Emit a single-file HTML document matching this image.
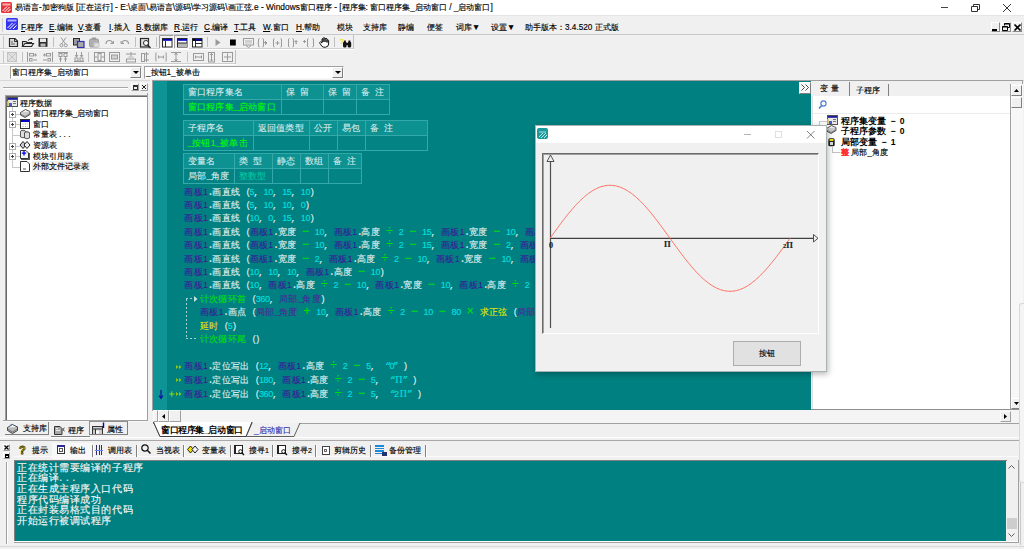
<!DOCTYPE html><html><head><meta charset="utf-8"><style>
*{margin:0;padding:0;box-sizing:border-box}
html,body{width:1024px;height:549px;overflow:hidden;background:#f0f0f0;font-family:"Liberation Sans",sans-serif;font-size:9px;color:#000}
div{position:absolute;white-space:nowrap;-webkit-text-stroke:0.15px currentColor}
span{white-space:pre}
.cd{font-size:9px;letter-spacing:-0.34px}
.ca,.cc,.fw,.cd{-webkit-text-stroke-width:0.1px}
.ca{font-family:"Liberation Mono",monospace;font-size:10px;letter-spacing:-1.34px}
.cc{font-size:9.32px;letter-spacing:0.32px}
.fw{display:inline-block;width:9.32px;text-align:center;font-size:9.32px}
.fl{text-align:left;font-family:"Liberation Mono",monospace;text-indent:-1px}
.fr{text-align:right;font-family:"Liberation Mono",monospace;letter-spacing:-1.5px}
.op{font-size:12px;line-height:10px}
.code{height:13px;line-height:13px}
svg{position:absolute;overflow:visible}
</style></head><body><div style="left:0px;top:0px;width:1024px;height:15px;background:#fff"></div><div style="left:0px;top:15px;width:1024px;height:1px;background:#e6e6e6"></div><div style="left:15px;top:1px;font-size:8.35px;line-height:13px;color:#000">易语言-加密狗版 [正在运行] - E:\桌面\易语言\源码\学习源码\画正弦.e - Windows窗口程序 - [程序集: 窗口程序集_启动窗口 / _启动窗口]</div><div style="left:941px;top:7px;width:7px;height:1px;background:#444"></div><svg style="left:971px;top:4px" width="9" height="8"><path d="M0.5 2.5H6.5V7.5H0.5Z" fill="none" stroke="#333"/><path d="M2.5 2.5V0.5H8.5V5.5H6.5" fill="none" stroke="#333"/></svg><svg style="left:1003px;top:4px" width="8" height="8"><path d="M0 0L8 8M8 0L0 8" stroke="#333" stroke-width="1"/></svg><div style="left:0px;top:34px;width:1024px;height:1px;background:#c8c8c8"></div><div style="left:2px;top:18px;width:1px;height:14px;background:#d0d0d0"></div><div style="left:21px;top:21px;font-size:8.2px;line-height:13px;color:#000"><span style="text-decoration:underline">F</span>.程序</div><div style="left:49px;top:21px;font-size:8.2px;line-height:13px;color:#000"><span style="text-decoration:underline">E</span>.编辑</div><div style="left:78px;top:21px;font-size:8.2px;line-height:13px;color:#000"><span style="text-decoration:underline">V</span>.查看</div><div style="left:109px;top:21px;font-size:8.2px;line-height:13px;color:#000"><span style="text-decoration:underline">I</span>.插入</div><div style="left:136px;top:21px;font-size:8.2px;line-height:13px;color:#000"><span style="text-decoration:underline">B</span>.数据库</div><div style="left:174px;top:21px;font-size:8.2px;line-height:13px;color:#000"><span style="text-decoration:underline">R</span>.运行</div><div style="left:204px;top:21px;font-size:8.2px;line-height:13px;color:#000"><span style="text-decoration:underline">C</span>.编译</div><div style="left:234px;top:21px;font-size:8.2px;line-height:13px;color:#000"><span style="text-decoration:underline">T</span>.工具</div><div style="left:263px;top:21px;font-size:8.2px;line-height:13px;color:#000"><span style="text-decoration:underline">W</span>.窗口</div><div style="left:296px;top:21px;font-size:8.2px;line-height:13px;color:#000"><span style="text-decoration:underline">H</span>.帮助</div><div style="left:337px;top:21px;font-size:8.2px;line-height:13px;color:#000">模块</div><div style="left:363px;top:21px;font-size:8.2px;line-height:13px;color:#000">支持库</div><div style="left:398px;top:21px;font-size:8.2px;line-height:13px;color:#000">静编</div><div style="left:427px;top:21px;font-size:8.2px;line-height:13px;color:#000">便签</div><div style="left:456px;top:21px;font-size:8.2px;line-height:13px;color:#000">词库▼</div><div style="left:491px;top:21px;font-size:8.2px;line-height:13px;color:#000">设置▼</div><div style="left:525px;top:21px;font-size:8.2px;line-height:13px;color:#000">助手版本：3.4.520 正式版</div><div style="left:991px;top:22px;width:9px;height:10px;border:1px solid;border-color:#fff #888 #888 #fff"></div><div style="left:992px;top:29px;width:5px;height:2px;background:#000"></div><div style="left:1001px;top:22px;width:10px;height:10px;border:1px solid;border-color:#fff #888 #888 #fff"></div><svg style="left:1002px;top:23px" width="8" height="8"><path d="M2.5 2.5V0.5H7.5V4.5H5.5" fill="none" stroke="#000"/><path d="M2.5 1H7.5" stroke="#000"/><path d="M0.5 3.5H5.5V7.5H0.5Z" fill="none" stroke="#000"/><path d="M0.5 4H5.5" stroke="#000"/></svg><div style="left:1012px;top:22px;width:10px;height:10px;border:1px solid;border-color:#fff #888 #888 #fff"></div><svg style="left:1014px;top:24px" width="7" height="7"><path d="M0.5 0.5L6.5 6.5M6.5 0.5L0.5 6.5" stroke="#000" stroke-width="1.6"/></svg><div style="left:0px;top:48px;width:354px;height:1px;background:#d0d0d0"></div><div style="left:0px;top:49px;width:354px;height:1px;background:#fff"></div><div style="left:0px;top:63px;width:236px;height:1px;background:#d0d0d0"></div><div style="left:0px;top:64px;width:236px;height:1px;background:#fff"></div><div style="left:353px;top:35px;width:1px;height:14px;background:#c0c0c0"></div><div style="left:235px;top:50px;width:1px;height:14px;background:#c0c0c0"></div><div style="left:3px;top:36px;width:1px;height:12px;background:#c8c8c8"></div><div style="left:3px;top:51px;width:1px;height:12px;background:#c8c8c8"></div><div style="left:53px;top:37px;width:1px;height:10px;background:#c0c0c0"></div><div style="left:135px;top:37px;width:1px;height:10px;background:#c0c0c0"></div><div style="left:156px;top:37px;width:1px;height:10px;background:#c0c0c0"></div><div style="left:207px;top:37px;width:1px;height:10px;background:#c0c0c0"></div><div style="left:334px;top:37px;width:1px;height:10px;background:#c0c0c0"></div><div style="left:22px;top:52px;width:1px;height:10px;background:#c0c0c0"></div><div style="left:88px;top:52px;width:1px;height:10px;background:#c0c0c0"></div><div style="left:187px;top:52px;width:1px;height:10px;background:#c0c0c0"></div><div style="left:10px;top:66px;width:132px;height:13px;background:#fff;border:1px solid;border-color:#a0a0a0 #f8f8f8 #f8f8f8 #a0a0a0"></div><div style="left:12px;top:67px;font-size:8.2px;line-height:12px">窗口程序集_启动窗口</div><div style="left:130px;top:67px;width:11px;height:11px;background:#f0f0f0;border:1px solid;border-color:#fff #808080 #808080 #fff"></div><svg style="left:133px;top:71px" width="6" height="4"><path d="M0 0H6L3 3Z" fill="#000"/></svg><div style="left:144px;top:66px;width:200px;height:13px;background:#fff;border:1px solid;border-color:#a0a0a0 #f8f8f8 #f8f8f8 #a0a0a0"></div><div style="left:146px;top:67px;font-size:8.2px;line-height:12px">_按钮1_被单击</div><div style="left:332px;top:67px;width:11px;height:11px;background:#f0f0f0;border:1px solid;border-color:#fff #808080 #808080 #fff"></div><svg style="left:335px;top:71px" width="6" height="4"><path d="M0 0H6L3 3Z" fill="#000"/></svg><div style="left:0px;top:80px;width:1024px;height:1px;background:#d8d8d8"></div><svg style="left:0;top:0" width="360" height="66"><path d="M159.5 48.5V35.5H173.5" stroke="#a0a0a0" fill="none"/><path d="M173.5 35.5V48.5H159.5" stroke="#fff" fill="none"/><path d="M174.5 48.5V35.5H188.5" stroke="#a0a0a0" fill="none"/><path d="M188.5 35.5V48.5H174.5" stroke="#fff" fill="none"/><path d="M9.5 38.5H15L17.5 41V46.5H9.5Z" fill="#d8d8d8" stroke="#2a2a2a" stroke-width="1.2"/><path d="M14.5 38.5V41.5H17.5" fill="none" stroke="#2a2a2a"/><path d="M11 42H13M11 44H15" stroke="#666"/><path d="M22.5 41.5H26L27 42.5H31.5V46.5H22.5Z" fill="#cfcfcf" stroke="#2a2a2a" stroke-width="1.1"/><path d="M22.5 46.5L25 43.5H33.5L31.5 46.5Z" fill="#e8e8e8" stroke="#2a2a2a" stroke-width="1.1"/><path d="M28 40.5Q30 38 32.5 39" stroke="#2a2a2a" fill="none"/><path d="M31.5 37.5L33 39.5L30.5 40" fill="#2a2a2a"/><rect x="38.5" y="38" width="9" height="8.8" fill="#2a2a2a"/><rect x="40" y="38.5" width="6" height="3.5" fill="#e8e8e8"/><rect x="40.5" y="43.5" width="5" height="3" fill="#bbb"/><path d="M61 37.5L65.5 44M66 37.5L61.5 44" stroke="#9a9a9a" fill="none"/><circle cx="61.5" cy="45.3" r="1.5" stroke="#9a9a9a" fill="none"/><circle cx="65.8" cy="45.3" r="1.5" stroke="#9a9a9a" fill="none"/><rect x="73.5" y="38.5" width="6" height="6.5" fill="#999" stroke="#2a2a2a"/><rect x="77.5" y="41.5" width="6.5" height="6" fill="#aaa" stroke="#3030b0" stroke-width="1.2"/><rect x="89.5" y="39" width="9" height="8" rx="1.5" fill="#b0b0b0" stroke="#9a9a9a"/><rect x="92" y="37.5" width="4" height="2" fill="#9a9a9a"/><rect x="94" y="43" width="5" height="4" fill="#e0e0e0" stroke="#c4c4c4"/><path d="M106 44Q106 40.5 109.5 40.5Q112 40.5 112.5 43" stroke="#9a9a9a" fill="none" stroke-width="1.2"/><path d="M110.5 43.5H113.5V41" stroke="#9a9a9a" fill="none"/><path d="M128.5 44Q128.5 40.5 125 40.5Q122.5 40.5 122 43" stroke="#9a9a9a" fill="none" stroke-width="1.2"/><path d="M124 43.5H121V41" stroke="#9a9a9a" fill="none"/><rect x="140.5" y="38.5" width="8" height="8.5" fill="#ddd" stroke="#2a2a2a" stroke-width="1.2"/><circle cx="146" cy="43" r="2.5" fill="#fff" stroke="#2a2a2a"/><path d="M147.5 45L150.5 48" stroke="#2a2a2a" stroke-width="1.4"/><rect x="162.5" y="38.5" width="9.5" height="8.5" fill="#fff" stroke="#2a2a2a"/><rect x="163" y="39" width="9" height="1.8" fill="#0000c0"/><path d="M165.5 41V47" stroke="#2a2a2a"/><rect x="177.5" y="38.5" width="9.5" height="8.5" fill="#fff" stroke="#2a2a2a"/><rect x="178" y="39" width="9" height="1.8" fill="#0000c0"/><rect x="178" y="43" width="9" height="4" fill="#b8b8b8"/><path d="M178 43H187" stroke="#2a2a2a"/><rect x="192.5" y="38.5" width="9.5" height="8.5" fill="#fff" stroke="#2a2a2a"/><rect x="193" y="39" width="9" height="1.8" fill="#0000c0"/><path d="M195.5 41V47M195 43.5H202" stroke="#2a2a2a"/><rect x="193" y="39" width="9" height="1.8" fill="#000"/><rect x="195" y="39" width="7" height="1.4" fill="#0000c0"/><path d="M215.5 39V46L220.5 42.5Z" fill="#9a9a9a"/><rect x="230" y="39.5" width="5.8" height="6" fill="#000"/><rect x="243.5" y="38.5" width="10" height="6.5" fill="none" stroke="#9a9a9a"/><path d="M246 45.5L248.5 47.5L251 45.5" stroke="#9a9a9a" fill="none"/><rect x="245" y="40" width="7" height="3.5" fill="#d0d0d0"/><path d="M259.5 38.5Q258.5 38.5 258.5 40V42Q258.5 43 257.8 43Q258.5 43 258.5 44V46Q258.5 47 259.5 47M262.5 38.5Q263.5 38.5 263.5 40V46Q263.5 47 262.5 47M264 42.5H267M265.5 41V44.5L266.8 43" stroke="#9a9a9a" fill="none"/><path d="M274.5 38.5Q273.5 38.5 273.5 40V46Q273.5 47 274.5 47M280.5 38.5Q281.5 38.5 281.5 40V46Q281.5 47 280.5 47M275.5 43H279.5M277.5 41V45" stroke="#9a9a9a" fill="none"/><path d="M289.5 38.5Q288.5 38.5 288.5 40V46Q288.5 47 289.5 47M292.5 38.5Q293.5 38.5 293.5 40V46Q293.5 47 292.5 47M294.5 41.5H297.5M296 40V44L297 43" stroke="#9a9a9a" fill="none"/><path d="M303 41.5H306M304.5 40V43M308.5 38.5Q307.5 38.5 307.5 40V46Q307.5 47 308.5 47M312.5 38.5Q313.5 38.5 313.5 40V46Q313.5 47 312.5 47" stroke="#9a9a9a" fill="none"/><path d="M320 43.5Q319 42.5 320.5 41.8L322 43V39.5Q322 38.5 323 38.8V42V38.2Q324 37.3 325 38.2V42V38.8Q326 38 327 38.8V42.5V40Q328 39.5 328.6 40.3V44Q328.5 47 325.5 47.2H323.5Q322 47 320 43.5Z" fill="#fff" stroke="#111" stroke-width="1"/><rect x="343" y="41.5" width="3.6" height="6" rx="1.5" fill="#111"/><rect x="347.6" y="41.5" width="3.6" height="6" rx="1.5" fill="#111"/><rect x="344" y="40.5" width="1.8" height="2" fill="#111"/><rect x="348.5" y="40.5" width="1.8" height="2" fill="#111"/><rect x="345.5" y="43" width="3" height="2" fill="#111"/><text x="339.5" y="44" font-family="Liberation Sans" font-size="8" font-weight="bold" fill="#f0e000">?</text><rect x="7.5" y="52.5" width="9" height="9" fill="#e0e0e0" stroke="#c4c4c4"/><path d="M8 53L16 61M16 53L8 61" stroke="#c4c4c4"/><path d="M27.5 52V62" stroke="#9a9a9a"/><rect x="29.5" y="53.5" width="4" height="2.5" fill="none" stroke="#9a9a9a"/><rect x="29.5" y="58.5" width="2.5" height="2.5" fill="none" stroke="#9a9a9a"/><path d="M34 55H37M35.5 53.5V56.5M33 60H37" stroke="#9a9a9a"/><path d="M52.5 52V62" stroke="#9a9a9a"/><rect x="46.5" y="53.5" width="4" height="2.5" fill="none" stroke="#9a9a9a"/><rect x="48" y="58.5" width="2.5" height="2.5" fill="none" stroke="#9a9a9a"/><path d="M43 55H46M44.5 53.5V56.5M43 60H47" stroke="#9a9a9a"/><path d="M58 52.5H68" stroke="#9a9a9a"/><rect x="59" y="53.5" width="3" height="3" fill="none" stroke="#9a9a9a"/><rect x="64" y="53.5" width="3" height="3" fill="none" stroke="#9a9a9a"/><path d="M60.5 57V62M65.5 57V62M59 59H62M64 59H67" stroke="#9a9a9a"/><path d="M74 61.5H84" stroke="#9a9a9a"/><rect x="75" y="58" width="3" height="3" fill="none" stroke="#9a9a9a"/><rect x="80" y="58" width="3" height="3" fill="none" stroke="#9a9a9a"/><path d="M76.5 52V57M81.5 52V57M75 55L76.5 57L78 55M80 55L81.5 57L83 55" stroke="#9a9a9a" fill="none"/><rect x="94.5" y="52.5" width="10" height="9" fill="none" stroke="#9a9a9a"/><rect x="98" y="53.5" width="3" height="7" fill="none" stroke="#9a9a9a"/><path d="M95 57H97.5M101.5 57H104" stroke="#9a9a9a"/><rect x="109.5" y="52.5" width="10" height="9" fill="none" stroke="#9a9a9a"/><rect x="111.5" y="55" width="6" height="4" fill="#d0d0d0" stroke="#9a9a9a"/><rect x="126.5" y="59" width="9" height="3" fill="none" stroke="#9a9a9a"/><rect x="128.5" y="56" width="5" height="2.5" fill="#d0d0d0"/><path d="M126 54H136M131 52V56" stroke="#9a9a9a"/><rect x="141.5" y="53.5" width="3" height="8" fill="none" stroke="#9a9a9a"/><path d="M146.5 52V62M145 54H149M145 60H149" stroke="#9a9a9a"/><path d="M156 52.5Q155.5 57 156 61.5M166 52.5Q166.5 57 166 61.5M158 57H164M158.5 55.5V58.5M163.5 55.5V58.5" stroke="#9a9a9a" fill="none"/><path d="M171 52.5H181M171 61.5H181M176 53V61M174.5 55L176 53L177.5 55M174.5 59L176 61L177.5 59" stroke="#9a9a9a" fill="none"/><rect x="193.5" y="53.5" width="10" height="7" fill="none" stroke="#9a9a9a"/><path d="M195 57H202M195.5 55.5V58.5M201.5 55.5V58.5" stroke="#9a9a9a"/><rect x="208.5" y="52.5" width="6" height="9.5" fill="none" stroke="#9a9a9a"/><path d="M211.5 53.5V61M210 55L211.5 53.5L213 55M210 59.5L211.5 61L213 59.5" stroke="#9a9a9a" fill="none"/><rect x="222.5" y="52.5" width="10" height="9" fill="none" stroke="#9a9a9a"/><path d="M224 57H231M227.5 53.5V60.5" stroke="#9a9a9a"/></svg><svg style="left:1px;top:2px" width="11" height="11"><rect width="11" height="11" rx="1.5" fill="#e8343a"/><rect x="1.5" y="1.5" width="8" height="2" fill="#f8b0b0"/><path d="M1.5 9L6 4.5M3.5 10L8.5 5M6.5 10L9.5 7" stroke="#fff" stroke-width="1"/></svg><svg style="left:6px;top:18px" width="12" height="12"><rect width="12" height="12" rx="1.5" fill="#3434f0"/><rect x="1.5" y="1.5" width="9" height="2" fill="#b0b0ff"/><path d="M1.5 10L6.5 5M3.5 11L9 5.5M7 11L10.5 7.5" stroke="#fff" stroke-width="1"/></svg><div style="left:3px;top:87px;width:125px;height:1px;background:#a8a8a8"></div><div style="left:3px;top:88px;width:125px;height:1px;background:#fff"></div><div style="left:131px;top:83px;width:8px;height:8px;border:1px solid;border-color:#fff #a0a0a0 #a0a0a0 #fff"></div><div style="left:133px;top:85px;width:5px;height:5px;border:1px solid #303030;border-top-width:2px"></div><div style="left:140px;top:83px;width:8px;height:8px;border:1px solid;border-color:#fff #a0a0a0 #a0a0a0 #fff"></div><svg style="left:141px;top:84px" width="6" height="6"><path d="M1 1L5 5M5 1L1 5" stroke="#202020" stroke-width="1"/></svg><div style="left:5px;top:95px;width:143px;height:326px;background:#fff;border:1px solid;border-color:#a0a0a0 #e8e8e8 #e8e8e8 #a0a0a0;box-shadow:inset 1px 1px 0 #696969"></div><div style="left:147px;top:93px;width:1px;height:329px;background:#a0a0a0"></div><div style="left:12px;top:107px;width:1px;height:60px;background:#c8c8c8"></div><div style="left:12px;top:114px;width:8px;height:1px;background:#c8c8c8"></div><div style="left:12px;top:124px;width:8px;height:1px;background:#c8c8c8"></div><div style="left:12px;top:135px;width:8px;height:1px;background:#c8c8c8"></div><div style="left:12px;top:146px;width:8px;height:1px;background:#c8c8c8"></div><div style="left:12px;top:156px;width:8px;height:1px;background:#c8c8c8"></div><div style="left:12px;top:167px;width:8px;height:1px;background:#c8c8c8"></div><div style="left:32px;top:161px;width:58px;height:11px;background:#f0f0f0"></div><div style="left:20px;top:97.5px;font-size:8.3px;line-height:11px;color:#000">程序数据</div><div style="left:32.7px;top:108.2px;font-size:8.3px;line-height:11px;color:#000">窗口程序集_启动窗口</div><div style="left:9px;top:111px;width:7px;height:7px;background:#fff;border:1px solid #b0b0b0"></div><div style="left:11px;top:114px;width:3px;height:1px;background:#404040"></div><div style="left:12px;top:113px;width:1px;height:3px;background:#404040"></div><div style="left:32.7px;top:118.8px;font-size:8.3px;line-height:11px;color:#000">窗口</div><div style="left:9px;top:121px;width:7px;height:7px;background:#fff;border:1px solid #b0b0b0"></div><div style="left:11px;top:124px;width:3px;height:1px;background:#404040"></div><div style="left:12px;top:123px;width:1px;height:3px;background:#404040"></div><div style="left:32.7px;top:129.4px;font-size:8.3px;line-height:11px;color:#000">常量表 . . .</div><div style="left:32.7px;top:140.0px;font-size:8.3px;line-height:11px;color:#000">资源表</div><div style="left:9px;top:143px;width:7px;height:7px;background:#fff;border:1px solid #b0b0b0"></div><div style="left:11px;top:146px;width:3px;height:1px;background:#404040"></div><div style="left:12px;top:145px;width:1px;height:3px;background:#404040"></div><div style="left:32.7px;top:150.6px;font-size:8.3px;line-height:11px;color:#000">模块引用表</div><div style="left:9px;top:153px;width:7px;height:7px;background:#fff;border:1px solid #b0b0b0"></div><div style="left:11px;top:156px;width:3px;height:1px;background:#404040"></div><div style="left:12px;top:155px;width:1px;height:3px;background:#404040"></div><div style="left:32.7px;top:161.2px;font-size:8.3px;line-height:11px;color:#000">外部文件记录表</div><svg style="left:0;top:0" width="40" height="180"><rect x="7.5" y="97.5" width="10" height="9" fill="#e8e8e8" stroke="#555"/><rect x="8" y="98" width="9" height="1.8" fill="#1a1aa0"/><rect x="7" y="101" width="1.5" height="5" fill="#e0b020"/><rect x="9" y="103" width="3" height="3" fill="#4060d0"/><path d="M13 101.5H16M13 103.5H16" stroke="#777"/><path d="M20.5 112.5L25.5 109.5L30 111.5L25 114.5Z" fill="#f0f0f0" stroke="#444" stroke-width="0.9"/><path d="M20.5 112.5V115L25 117.5L30 114.5V111.5" fill="#ccc" stroke="#444" stroke-width="0.9"/><path d="M20.5 114L25 116.5L30 113.5" fill="none" stroke="#666" stroke-width="0.7"/><rect x="20.5" y="119.5" width="9" height="9" fill="#fff" stroke="#333"/><rect x="21" y="120" width="8" height="2" fill="#0000c0"/><path d="M22.5 124H23.5M25 124H26M27.5 124H28M22.5 126.5H23.5M25 126.5H26M27.5 126.5H28" stroke="#aaa"/><ellipse cx="23" cy="131.5" rx="2.5" ry="1.3" fill="#bbb" stroke="#333" stroke-width="0.8"/><path d="M20.5 131.5V137Q23 138.5 25.5 137V131.5" fill="#ddd" stroke="#333" stroke-width="0.8"/><ellipse cx="27" cy="133" rx="2.5" ry="1.3" fill="#bbb" stroke="#333" stroke-width="0.8"/><path d="M24.5 133V138Q27 139.5 29.5 138V133" fill="#ddd" stroke="#333" stroke-width="0.8"/><path d="M20 145L23 141.5L26 145L23 148.5Z" fill="#ccc" stroke="#222"/><path d="M24 145L27 141.5L30 145L27 148.5Z" fill="#eee" stroke="#222"/><rect x="21.5" y="153.5" width="8" height="6" fill="#ccc" stroke="#555"/><path d="M20.5 150.5H26L28.5 153V158.5H20.5Z" fill="#f4f4f4" stroke="#333"/><path d="M24 151V155.5M21.8 153.2H26.2" stroke="#0000ff" stroke-width="1.3"/><path d="M20.5 161.5H27L29.5 164V171.5H20.5Z" fill="#fff" stroke="#333"/><path d="M23 169H26" stroke="#555"/></svg><div style="left:3px;top:420px;width:145px;height:1px;background:#a0a0a0"></div><div style="left:3px;top:421px;width:145px;height:1px;background:#f8f8f8"></div><div style="left:5px;top:434px;width:44px;height:1px;background:#808080"></div><div style="left:48px;top:422px;width:1px;height:13px;background:#808080"></div><svg style="left:0;top:418px" width="132" height="22"><path d="M7.5 9.5L12.5 6.5L17.5 9L12.5 12Z" fill="#f4f4f4" stroke="#333" stroke-width="0.9"/><path d="M7.5 9.5V12.5L12.5 15.5L17.5 12.5V9" fill="#bbb" stroke="#333" stroke-width="0.9"/><path d="M7.5 11L12.5 14L17.5 11" fill="none" stroke="#555" stroke-width="0.7"/><path d="M10 7.5L12 6" stroke="#4080d0" stroke-width="1"/><path d="M54.5 8.5H60L62 10.5V16.5H54.5Z" fill="#aaa" stroke="#333"/><path d="M56 10.5H58M56 12.5H60" stroke="#eee"/><path d="M64.5 10L62.8 11.5L64.5 13" fill="none" stroke="#111" stroke-width="0.9"/><rect x="92.5" y="8.5" width="10" height="8" fill="#ccc" stroke="#333"/><path d="M92.5 11H102.5M95.5 11V16.5" stroke="#333"/><rect x="96" y="12.5" width="3" height="3" fill="#fff"/><path d="M103.5 4.5V10" stroke="#0000c0" stroke-width="1.4"/></svg><div style="left:23px;top:423px;font-size:8.2px;line-height:11px">支持库</div><div style="left:51px;top:436px;width:39px;height:1px;background:#808080"></div><div style="left:68px;top:424.5px;font-size:8.2px;line-height:11px">程序</div><div style="left:89px;top:421px;width:39px;height:14px;border:1px solid;border-color:#909090 #808080 #808080 #909090"></div><div style="left:107px;top:423.5px;font-size:8.2px;line-height:11px">属性</div><div style="left:150px;top:80px;width:661px;height:331px;background:#f4f4f4"></div><div style="left:152px;top:80px;width:659px;height:1px;background:#a0a0a0"></div><div style="left:152px;top:80px;width:1px;height:331px;background:#a0a0a0"></div><div style="left:153px;top:81px;width:658px;height:329px;background:#008080"></div><div style="left:153px;top:81px;width:14px;height:329px;background:#0e9494"></div><div style="left:183px;top:84px;width:207px;height:15px;background:#0e9191"></div><div style="left:183px;top:99px;width:207px;height:15px;background:#038383"></div><div style="left:183px;top:84px;width:207px;height:1px;background:#34a9a9"></div><div style="left:183px;top:99px;width:207px;height:1px;background:#34a9a9"></div><div style="left:183px;top:114px;width:207px;height:1px;background:#34a9a9"></div><div style="left:183px;top:84px;width:1px;height:31px;background:#34a9a9"></div><div style="left:281px;top:84px;width:1px;height:31px;background:#34a9a9"></div><div style="left:323px;top:84px;width:1px;height:31px;background:#34a9a9"></div><div style="left:356px;top:84px;width:1px;height:31px;background:#34a9a9"></div><div style="left:389px;top:84px;width:1px;height:31px;background:#34a9a9"></div><div style="left:187.5px;top:85px;height:14px;line-height:14px"><span class="cc" style="color:#d8ecec">窗口程序集名</span></div><div style="left:285.5px;top:85px;height:14px;line-height:14px"><span class="cc" style="color:#d8ecec">保</span><span class="ca" style="color:#d8ecec"> </span><span class="cc" style="color:#d8ecec">留</span></div><div style="left:327.5px;top:85px;height:14px;line-height:14px"><span class="cc" style="color:#d8ecec">保</span><span class="ca" style="color:#d8ecec"> </span><span class="cc" style="color:#d8ecec">留</span></div><div style="left:360.5px;top:85px;height:14px;line-height:14px"><span class="cc" style="color:#d8ecec">备</span><span class="ca" style="color:#d8ecec"> </span><span class="cc" style="color:#d8ecec">注</span></div><div style="left:187.5px;top:100px;height:14px;line-height:14px"><span class="cc" style="color:#00ff00">窗口程序集</span><span class="ca" style="color:#00ff00">_</span><span class="cc" style="color:#00ff00">启动窗口</span></div><div style="left:183px;top:120px;width:245px;height:15px;background:#0e9191"></div><div style="left:183px;top:135px;width:245px;height:15px;background:#038383"></div><div style="left:183px;top:120px;width:245px;height:1px;background:#34a9a9"></div><div style="left:183px;top:135px;width:245px;height:1px;background:#34a9a9"></div><div style="left:183px;top:150px;width:245px;height:1px;background:#34a9a9"></div><div style="left:183px;top:120px;width:1px;height:31px;background:#34a9a9"></div><div style="left:253px;top:120px;width:1px;height:31px;background:#34a9a9"></div><div style="left:309px;top:120px;width:1px;height:31px;background:#34a9a9"></div><div style="left:337px;top:120px;width:1px;height:31px;background:#34a9a9"></div><div style="left:365px;top:120px;width:1px;height:31px;background:#34a9a9"></div><div style="left:427px;top:120px;width:1px;height:31px;background:#34a9a9"></div><div style="left:187.5px;top:121px;height:14px;line-height:14px"><span class="cc" style="color:#d8ecec">子程序名</span></div><div style="left:257.5px;top:121px;height:14px;line-height:14px"><span class="cc" style="color:#d8ecec">返回值类型</span></div><div style="left:313.5px;top:121px;height:14px;line-height:14px"><span class="cc" style="color:#d8ecec">公开</span></div><div style="left:341.5px;top:121px;height:14px;line-height:14px"><span class="cc" style="color:#d8ecec">易包</span></div><div style="left:369.5px;top:121px;height:14px;line-height:14px"><span class="cc" style="color:#d8ecec">备</span><span class="ca" style="color:#d8ecec"> </span><span class="cc" style="color:#d8ecec">注</span></div><div style="left:187.5px;top:136px;height:14px;line-height:14px"><span class="ca" style="color:#00ff00">_</span><span class="cc" style="color:#00ff00">按钮</span><span class="cd" style="color:#00ff00">1</span><span class="ca" style="color:#00ff00">_</span><span class="cc" style="color:#00ff00">被单击</span></div><div style="left:183px;top:153px;width:179px;height:15px;background:#0e9191"></div><div style="left:183px;top:168px;width:179px;height:15px;background:#038383"></div><div style="left:183px;top:153px;width:179px;height:1px;background:#34a9a9"></div><div style="left:183px;top:168px;width:179px;height:1px;background:#34a9a9"></div><div style="left:183px;top:183px;width:179px;height:1px;background:#34a9a9"></div><div style="left:183px;top:153px;width:1px;height:31px;background:#34a9a9"></div><div style="left:234px;top:153px;width:1px;height:31px;background:#34a9a9"></div><div style="left:272px;top:153px;width:1px;height:31px;background:#34a9a9"></div><div style="left:300px;top:153px;width:1px;height:31px;background:#34a9a9"></div><div style="left:328px;top:153px;width:1px;height:31px;background:#34a9a9"></div><div style="left:361px;top:153px;width:1px;height:31px;background:#34a9a9"></div><div style="left:187.5px;top:154px;height:14px;line-height:14px"><span class="cc" style="color:#d8ecec">变量名</span></div><div style="left:238.5px;top:154px;height:14px;line-height:14px"><span class="cc" style="color:#d8ecec">类</span><span class="ca" style="color:#d8ecec"> </span><span class="cc" style="color:#d8ecec">型</span></div><div style="left:276.5px;top:154px;height:14px;line-height:14px"><span class="cc" style="color:#d8ecec">静态</span></div><div style="left:304.5px;top:154px;height:14px;line-height:14px"><span class="cc" style="color:#d8ecec">数组</span></div><div style="left:332.5px;top:154px;height:14px;line-height:14px"><span class="cc" style="color:#d8ecec">备</span><span class="ca" style="color:#d8ecec"> </span><span class="cc" style="color:#d8ecec">注</span></div><div style="left:187.5px;top:169px;height:14px;line-height:14px"><span class="cc" style="color:#d8ecec">局部</span><span class="ca" style="color:#d8ecec">_</span><span class="cc" style="color:#d8ecec">角度</span></div><div style="left:238.5px;top:169px;height:14px;line-height:14px"><span class="cc" style="color:#00c8a0">整数型</span></div><div style="left:184.3px;top:185.5px;height:13px;line-height:13px"><span class="cc" style="color:#3a1a9a">画板</span><span class="cd" style="color:#3a1a9a">1</span><span class="ca" style="color:#e0f0f0">.</span><span class="cc" style="color:#e0f0f0">画直线</span><span class="fw fr" style="color:#e0f0f0">(</span><span class="cd" style="color:#00e0e0">5</span><span class="fw fl" style="color:#e0f0f0">,</span><span class="cd" style="color:#00e0e0">10</span><span class="fw fl" style="color:#e0f0f0">,</span><span class="cd" style="color:#00e0e0">15</span><span class="fw fl" style="color:#e0f0f0">,</span><span class="cd" style="color:#00e0e0">10</span><span class="fw fl" style="color:#e0f0f0">)</span></div><div style="left:184.3px;top:198.9px;height:13px;line-height:13px"><span class="cc" style="color:#3a1a9a">画板</span><span class="cd" style="color:#3a1a9a">1</span><span class="ca" style="color:#e0f0f0">.</span><span class="cc" style="color:#e0f0f0">画直线</span><span class="fw fr" style="color:#e0f0f0">(</span><span class="cd" style="color:#00e0e0">5</span><span class="fw fl" style="color:#e0f0f0">,</span><span class="cd" style="color:#00e0e0">10</span><span class="fw fl" style="color:#e0f0f0">,</span><span class="cd" style="color:#00e0e0">10</span><span class="fw fl" style="color:#e0f0f0">,</span><span class="cd" style="color:#00e0e0">0</span><span class="fw fl" style="color:#e0f0f0">)</span></div><div style="left:184.3px;top:212.3px;height:13px;line-height:13px"><span class="cc" style="color:#3a1a9a">画板</span><span class="cd" style="color:#3a1a9a">1</span><span class="ca" style="color:#e0f0f0">.</span><span class="cc" style="color:#e0f0f0">画直线</span><span class="fw fr" style="color:#e0f0f0">(</span><span class="cd" style="color:#00e0e0">10</span><span class="fw fl" style="color:#e0f0f0">,</span><span class="cd" style="color:#00e0e0">0</span><span class="fw fl" style="color:#e0f0f0">,</span><span class="cd" style="color:#00e0e0">15</span><span class="fw fl" style="color:#e0f0f0">,</span><span class="cd" style="color:#00e0e0">10</span><span class="fw fl" style="color:#e0f0f0">)</span></div><div style="left:184.3px;top:225.7px;height:13px;line-height:13px"><span class="cc" style="color:#3a1a9a">画板</span><span class="cd" style="color:#3a1a9a">1</span><span class="ca" style="color:#e0f0f0">.</span><span class="cc" style="color:#e0f0f0">画直线</span><span class="fw fr" style="color:#e0f0f0">(</span><span class="cc" style="color:#3a1a9a">画板</span><span class="cd" style="color:#3a1a9a">1</span><span class="ca" style="color:#e0f0f0">.</span><span class="cc" style="color:#e0f0f0">宽度</span><span class="ca" style="color:#e0f0f0"> </span><span class="fw op" style="color:#00e000">−</span><span class="ca" style="color:#e0f0f0"> </span><span class="cd" style="color:#00e0e0">10</span><span class="fw fl" style="color:#e0f0f0">,</span><span class="cc" style="color:#3a1a9a">画板</span><span class="cd" style="color:#3a1a9a">1</span><span class="ca" style="color:#e0f0f0">.</span><span class="cc" style="color:#e0f0f0">高度</span><span class="ca" style="color:#e0f0f0"> </span><span class="fw op" style="color:#00e000">÷</span><span class="ca" style="color:#e0f0f0"> </span><span class="cd" style="color:#00e0e0">2</span><span class="ca" style="color:#e0f0f0"> </span><span class="fw op" style="color:#00e000">−</span><span class="ca" style="color:#e0f0f0"> </span><span class="cd" style="color:#00e0e0">15</span><span class="fw fl" style="color:#e0f0f0">,</span><span class="cc" style="color:#3a1a9a">画板</span><span class="cd" style="color:#3a1a9a">1</span><span class="ca" style="color:#e0f0f0">.</span><span class="cc" style="color:#e0f0f0">宽度</span><span class="ca" style="color:#e0f0f0"> </span><span class="fw op" style="color:#00e000">−</span><span class="ca" style="color:#e0f0f0"> </span><span class="cd" style="color:#00e0e0">10</span><span class="fw fl" style="color:#e0f0f0">,</span><span class="cc" style="color:#3a1a9a">画板</span><span class="cd" style="color:#3a1a9a">1</span><span class="ca" style="color:#e0f0f0">.</span><span class="cc" style="color:#e0f0f0">高度</span><span class="ca" style="color:#e0f0f0"> </span><span class="fw op" style="color:#00e000">÷</span><span class="ca" style="color:#e0f0f0"> </span><span class="cd" style="color:#00e0e0">2</span></div><div style="left:184.3px;top:239.1px;height:13px;line-height:13px"><span class="cc" style="color:#3a1a9a">画板</span><span class="cd" style="color:#3a1a9a">1</span><span class="ca" style="color:#e0f0f0">.</span><span class="cc" style="color:#e0f0f0">画直线</span><span class="fw fr" style="color:#e0f0f0">(</span><span class="cc" style="color:#3a1a9a">画板</span><span class="cd" style="color:#3a1a9a">1</span><span class="ca" style="color:#e0f0f0">.</span><span class="cc" style="color:#e0f0f0">宽度</span><span class="ca" style="color:#e0f0f0"> </span><span class="fw op" style="color:#00e000">−</span><span class="ca" style="color:#e0f0f0"> </span><span class="cd" style="color:#00e0e0">10</span><span class="fw fl" style="color:#e0f0f0">,</span><span class="cc" style="color:#3a1a9a">画板</span><span class="cd" style="color:#3a1a9a">1</span><span class="ca" style="color:#e0f0f0">.</span><span class="cc" style="color:#e0f0f0">高度</span><span class="ca" style="color:#e0f0f0"> </span><span class="fw op" style="color:#00e000">÷</span><span class="ca" style="color:#e0f0f0"> </span><span class="cd" style="color:#00e0e0">2</span><span class="ca" style="color:#e0f0f0"> </span><span class="fw op" style="color:#00e000">−</span><span class="ca" style="color:#e0f0f0"> </span><span class="cd" style="color:#00e0e0">15</span><span class="fw fl" style="color:#e0f0f0">,</span><span class="cc" style="color:#3a1a9a">画板</span><span class="cd" style="color:#3a1a9a">1</span><span class="ca" style="color:#e0f0f0">.</span><span class="cc" style="color:#e0f0f0">宽度</span><span class="ca" style="color:#e0f0f0"> </span><span class="fw op" style="color:#00e000">−</span><span class="ca" style="color:#e0f0f0"> </span><span class="cd" style="color:#00e0e0">2</span><span class="fw fl" style="color:#e0f0f0">,</span><span class="cc" style="color:#3a1a9a">画板</span><span class="cd" style="color:#3a1a9a">1</span><span class="ca" style="color:#e0f0f0">.</span><span class="cc" style="color:#e0f0f0">高度</span><span class="ca" style="color:#e0f0f0"> </span><span class="fw op" style="color:#00e000">÷</span><span class="ca" style="color:#e0f0f0"> </span><span class="cd" style="color:#00e0e0">2</span></div><div style="left:184.3px;top:252.5px;height:13px;line-height:13px"><span class="cc" style="color:#3a1a9a">画板</span><span class="cd" style="color:#3a1a9a">1</span><span class="ca" style="color:#e0f0f0">.</span><span class="cc" style="color:#e0f0f0">画直线</span><span class="fw fr" style="color:#e0f0f0">(</span><span class="cc" style="color:#3a1a9a">画板</span><span class="cd" style="color:#3a1a9a">1</span><span class="ca" style="color:#e0f0f0">.</span><span class="cc" style="color:#e0f0f0">宽度</span><span class="ca" style="color:#e0f0f0"> </span><span class="fw op" style="color:#00e000">−</span><span class="ca" style="color:#e0f0f0"> </span><span class="cd" style="color:#00e0e0">2</span><span class="fw fl" style="color:#e0f0f0">,</span><span class="cc" style="color:#3a1a9a">画板</span><span class="cd" style="color:#3a1a9a">1</span><span class="ca" style="color:#e0f0f0">.</span><span class="cc" style="color:#e0f0f0">高度</span><span class="ca" style="color:#e0f0f0"> </span><span class="fw op" style="color:#00e000">÷</span><span class="ca" style="color:#e0f0f0"> </span><span class="cd" style="color:#00e0e0">2</span><span class="ca" style="color:#e0f0f0"> </span><span class="fw op" style="color:#00e000">−</span><span class="ca" style="color:#e0f0f0"> </span><span class="cd" style="color:#00e0e0">10</span><span class="fw fl" style="color:#e0f0f0">,</span><span class="cc" style="color:#3a1a9a">画板</span><span class="cd" style="color:#3a1a9a">1</span><span class="ca" style="color:#e0f0f0">.</span><span class="cc" style="color:#e0f0f0">宽度</span><span class="ca" style="color:#e0f0f0"> </span><span class="fw op" style="color:#00e000">−</span><span class="ca" style="color:#e0f0f0"> </span><span class="cd" style="color:#00e0e0">10</span><span class="fw fl" style="color:#e0f0f0">,</span><span class="cc" style="color:#3a1a9a">画板</span><span class="cd" style="color:#3a1a9a">1</span><span class="ca" style="color:#e0f0f0">.</span><span class="cc" style="color:#e0f0f0">高度</span><span class="ca" style="color:#e0f0f0"> </span><span class="fw op" style="color:#00e000">÷</span><span class="ca" style="color:#e0f0f0"> </span><span class="cd" style="color:#00e0e0">2</span></div><div style="left:184.3px;top:265.9px;height:13px;line-height:13px"><span class="cc" style="color:#3a1a9a">画板</span><span class="cd" style="color:#3a1a9a">1</span><span class="ca" style="color:#e0f0f0">.</span><span class="cc" style="color:#e0f0f0">画直线</span><span class="fw fr" style="color:#e0f0f0">(</span><span class="cd" style="color:#00e0e0">10</span><span class="fw fl" style="color:#e0f0f0">,</span><span class="cd" style="color:#00e0e0">10</span><span class="fw fl" style="color:#e0f0f0">,</span><span class="cd" style="color:#00e0e0">10</span><span class="fw fl" style="color:#e0f0f0">,</span><span class="cc" style="color:#3a1a9a">画板</span><span class="cd" style="color:#3a1a9a">1</span><span class="ca" style="color:#e0f0f0">.</span><span class="cc" style="color:#e0f0f0">高度</span><span class="ca" style="color:#e0f0f0"> </span><span class="fw op" style="color:#00e000">−</span><span class="ca" style="color:#e0f0f0"> </span><span class="cd" style="color:#00e0e0">10</span><span class="fw fl" style="color:#e0f0f0">)</span></div><div style="left:184.3px;top:279.3px;height:13px;line-height:13px"><span class="cc" style="color:#3a1a9a">画板</span><span class="cd" style="color:#3a1a9a">1</span><span class="ca" style="color:#e0f0f0">.</span><span class="cc" style="color:#e0f0f0">画直线</span><span class="fw fr" style="color:#e0f0f0">(</span><span class="cd" style="color:#00e0e0">10</span><span class="fw fl" style="color:#e0f0f0">,</span><span class="cc" style="color:#3a1a9a">画板</span><span class="cd" style="color:#3a1a9a">1</span><span class="ca" style="color:#e0f0f0">.</span><span class="cc" style="color:#e0f0f0">高度</span><span class="ca" style="color:#e0f0f0"> </span><span class="fw op" style="color:#00e000">÷</span><span class="ca" style="color:#e0f0f0"> </span><span class="cd" style="color:#00e0e0">2</span><span class="ca" style="color:#e0f0f0"> </span><span class="fw op" style="color:#00e000">−</span><span class="ca" style="color:#e0f0f0"> </span><span class="cd" style="color:#00e0e0">10</span><span class="fw fl" style="color:#e0f0f0">,</span><span class="cc" style="color:#3a1a9a">画板</span><span class="cd" style="color:#3a1a9a">1</span><span class="ca" style="color:#e0f0f0">.</span><span class="cc" style="color:#e0f0f0">宽度</span><span class="ca" style="color:#e0f0f0"> </span><span class="fw op" style="color:#00e000">−</span><span class="ca" style="color:#e0f0f0"> </span><span class="cd" style="color:#00e0e0">10</span><span class="fw fl" style="color:#e0f0f0">,</span><span class="cc" style="color:#3a1a9a">画板</span><span class="cd" style="color:#3a1a9a">1</span><span class="ca" style="color:#e0f0f0">.</span><span class="cc" style="color:#e0f0f0">高度</span><span class="ca" style="color:#e0f0f0"> </span><span class="fw op" style="color:#00e000">÷</span><span class="ca" style="color:#e0f0f0"> </span><span class="cd" style="color:#00e0e0">2</span><span class="ca" style="color:#e0f0f0"> </span><span class="fw op" style="color:#00e000">−</span><span class="ca" style="color:#e0f0f0"> </span><span class="cd" style="color:#00e0e0">10</span></div><div style="left:199.78px;top:292.7px;height:13px;line-height:13px"><span class="cc" style="color:#00e000">计次循环首</span><span class="fw fr" style="color:#e0f0f0">(</span><span class="cd" style="color:#00e0e0">360</span><span class="fw fl" style="color:#e0f0f0">,</span><span class="cc" style="color:#4a2a9a">局部</span><span class="ca" style="color:#4a2a9a">_</span><span class="cc" style="color:#4a2a9a">角度</span><span class="fw fl" style="color:#e0f0f0">)</span></div><div style="left:199.78px;top:306.1px;height:13px;line-height:13px"><span class="cc" style="color:#3a1a9a">画板</span><span class="cd" style="color:#3a1a9a">1</span><span class="ca" style="color:#e0f0f0">.</span><span class="cc" style="color:#e0f0f0">画点</span><span class="fw fr" style="color:#e0f0f0">(</span><span class="cc" style="color:#4a2a9a">局部</span><span class="ca" style="color:#4a2a9a">_</span><span class="cc" style="color:#4a2a9a">角度</span><span class="ca" style="color:#e0f0f0"> </span><span class="fw op" style="color:#00e000">+</span><span class="ca" style="color:#e0f0f0"> </span><span class="cd" style="color:#00e0e0">10</span><span class="fw fl" style="color:#e0f0f0">,</span><span class="cc" style="color:#3a1a9a">画板</span><span class="cd" style="color:#3a1a9a">1</span><span class="ca" style="color:#e0f0f0">.</span><span class="cc" style="color:#e0f0f0">高度</span><span class="ca" style="color:#e0f0f0"> </span><span class="fw op" style="color:#00e000">÷</span><span class="ca" style="color:#e0f0f0"> </span><span class="cd" style="color:#00e0e0">2</span><span class="ca" style="color:#e0f0f0"> </span><span class="fw op" style="color:#00e000">−</span><span class="ca" style="color:#e0f0f0"> </span><span class="cd" style="color:#00e0e0">10</span><span class="ca" style="color:#e0f0f0"> </span><span class="fw op" style="color:#00e000">−</span><span class="ca" style="color:#e0f0f0"> </span><span class="cd" style="color:#00e0e0">80</span><span class="ca" style="color:#e0f0f0"> </span><span class="fw op" style="color:#00e000">×</span><span class="ca" style="color:#e0f0f0"> </span><span class="cc" style="color:#e8e800">求正弦</span><span class="fw fr" style="color:#e0f0f0">(</span><span class="cc" style="color:#4a2a9a">局部</span><span class="ca" style="color:#4a2a9a">_</span><span class="cc" style="color:#4a2a9a">角度</span></div><div style="left:199.78px;top:319.5px;height:13px;line-height:13px"><span class="cc" style="color:#e8e800">延时</span><span class="fw fr" style="color:#e0f0f0">(</span><span class="cd" style="color:#00e0e0">5</span><span class="fw fl" style="color:#e0f0f0">)</span></div><div style="left:199.78px;top:332.9px;height:13px;line-height:13px"><span class="cc" style="color:#00e000">计次循环尾</span><span class="fw fr" style="color:#e0f0f0">(</span><span class="fw fl" style="color:#e0f0f0">)</span></div><div style="left:184.3px;top:359.70000000000005px;height:13px;line-height:13px"><span class="cc" style="color:#3a1a9a">画板</span><span class="cd" style="color:#3a1a9a">1</span><span class="ca" style="color:#e0f0f0">.</span><span class="cc" style="color:#e0f0f0">定位写出</span><span class="fw fr" style="color:#e0f0f0">(</span><span class="cd" style="color:#00e0e0">12</span><span class="fw fl" style="color:#e0f0f0">,</span><span class="cc" style="color:#3a1a9a">画板</span><span class="cd" style="color:#3a1a9a">1</span><span class="ca" style="color:#e0f0f0">.</span><span class="cc" style="color:#e0f0f0">高度</span><span class="ca" style="color:#e0f0f0"> </span><span class="fw op" style="color:#00e000">÷</span><span class="ca" style="color:#e0f0f0"> </span><span class="cd" style="color:#00e0e0">2</span><span class="ca" style="color:#e0f0f0"> </span><span class="fw op" style="color:#00e000">−</span><span class="ca" style="color:#e0f0f0"> </span><span class="cd" style="color:#00e0e0">5</span><span class="fw fl" style="color:#e0f0f0">,</span><span class="fw fr" style="color:#00e0e0">“</span><span class="cd" style="color:#00e0e0">0</span><span class="fw fl" style="color:#00e0e0">”</span><span class="fw fl" style="color:#e0f0f0">)</span></div><div style="left:184.3px;top:373.1px;height:13px;line-height:13px"><span class="cc" style="color:#3a1a9a">画板</span><span class="cd" style="color:#3a1a9a">1</span><span class="ca" style="color:#e0f0f0">.</span><span class="cc" style="color:#e0f0f0">定位写出</span><span class="fw fr" style="color:#e0f0f0">(</span><span class="cd" style="color:#00e0e0">180</span><span class="fw fl" style="color:#e0f0f0">,</span><span class="cc" style="color:#3a1a9a">画板</span><span class="cd" style="color:#3a1a9a">1</span><span class="ca" style="color:#e0f0f0">.</span><span class="cc" style="color:#e0f0f0">高度</span><span class="ca" style="color:#e0f0f0"> </span><span class="fw op" style="color:#00e000">÷</span><span class="ca" style="color:#e0f0f0"> </span><span class="cd" style="color:#00e0e0">2</span><span class="ca" style="color:#e0f0f0"> </span><span class="fw op" style="color:#00e000">−</span><span class="ca" style="color:#e0f0f0"> </span><span class="cd" style="color:#00e0e0">5</span><span class="fw fl" style="color:#e0f0f0">,</span><span class="fw fr" style="color:#00e0e0">“</span><span class="fw" style="color:#00e0e0;font-family:'Liberation Serif',serif;font-size:10px">Π</span><span class="fw fl" style="color:#00e0e0">”</span><span class="fw fl" style="color:#e0f0f0">)</span></div><div style="left:184.3px;top:386.5px;height:13px;line-height:13px"><span class="cc" style="color:#3a1a9a">画板</span><span class="cd" style="color:#3a1a9a">1</span><span class="ca" style="color:#e0f0f0">.</span><span class="cc" style="color:#e0f0f0">定位写出</span><span class="fw fr" style="color:#e0f0f0">(</span><span class="cd" style="color:#00e0e0">360</span><span class="fw fl" style="color:#e0f0f0">,</span><span class="cc" style="color:#3a1a9a">画板</span><span class="cd" style="color:#3a1a9a">1</span><span class="ca" style="color:#e0f0f0">.</span><span class="cc" style="color:#e0f0f0">高度</span><span class="ca" style="color:#e0f0f0"> </span><span class="fw op" style="color:#00e000">÷</span><span class="ca" style="color:#e0f0f0"> </span><span class="cd" style="color:#00e0e0">2</span><span class="ca" style="color:#e0f0f0"> </span><span class="fw op" style="color:#00e000">−</span><span class="ca" style="color:#e0f0f0"> </span><span class="cd" style="color:#00e0e0">5</span><span class="fw fl" style="color:#e0f0f0">,</span><span class="fw fr" style="color:#00e0e0">“</span><span class="cd" style="color:#00e0e0">2</span><span class="fw" style="color:#00e0e0;font-family:'Liberation Serif',serif;font-size:10px">Π</span><span class="fw fl" style="color:#00e0e0">”</span><span class="fw fl" style="color:#e0f0f0">)</span></div><div style="left:186px;top:299px;width:1px;height:39px;background:repeating-linear-gradient(to bottom,#a8d0d0 0 2px,transparent 2px 4px)"></div><div style="left:186px;top:298px;width:7px;height:1px;background:repeating-linear-gradient(to right,#a8d0d0 0 2px,transparent 2px 4px)"></div><div style="left:186px;top:338px;width:12px;height:1px;background:repeating-linear-gradient(to right,#a8d0d0 0 2px,transparent 2px 4px)"></div><svg style="left:194px;top:295.5px" width="4" height="6"><path d="M0 0L3.5 3L0 6Z" fill="#c8e0e0"/></svg><svg style="left:176px;top:364.70000000000005px" width="6" height="4"><path d="M0 0L2.5 2L0 4ZM3 0L5.5 2L3 4Z" fill="#90c810"/></svg><svg style="left:176px;top:378.1px" width="6" height="4"><path d="M0 0L2.5 2L0 4ZM3 0L5.5 2L3 4Z" fill="#90c810"/></svg><svg style="left:176px;top:391.5px" width="6" height="4"><path d="M0 0L2.5 2L0 4ZM3 0L5.5 2L3 4Z" fill="#90c810"/></svg><svg style="left:169px;top:390.5px" width="6" height="6"><path d="M0 3H5.5M2.75 0.25V5.75" stroke="#a0e000" stroke-width="0.9"/></svg><svg style="left:158px;top:390px" width="6" height="9"><path d="M3 0V8M1 5.5L3 8.5L5 5.5" stroke="#1010a0" stroke-width="1.2" fill="none"/></svg><div style="left:153px;top:410px;width:869px;height:13px;background:#f4f4f4"></div><div style="left:153px;top:423px;width:869px;height:1px;background:#a0a0a0"></div><div style="left:153px;top:410px;width:5px;height:12px;border:1px solid;border-color:#fff #a0a0a0 #a0a0a0 #fff"></div><div style="left:158px;top:410px;width:11px;height:12px;border:1px solid;border-color:#fff #a0a0a0 #a0a0a0 #fff;background:#f0f0f0"></div><svg style="left:162px;top:414px" width="3" height="5"><path d="M3 0V5L0 2.5Z" fill="#000"/></svg><div style="left:169px;top:410px;width:12px;height:12px;border:1px solid;border-color:#fff #a0a0a0 #a0a0a0 #fff;background:#f0f0f0"></div><div style="left:1000px;top:411px;width:11px;height:11px;border:1px solid;border-color:#fff #a0a0a0 #a0a0a0 #fff;background:#f0f0f0"></div><svg style="left:1004px;top:414px" width="3" height="5"><path d="M0 0V5L3 2.5Z" fill="#000"/></svg><svg style="left:150px;top:423px" width="160" height="15"><path d="M153.5 -1 L160 13.5 L246 13.5 L252 -1" transform="translate(-150,0)" fill="#fff" stroke="#404040" stroke-width="1"/><path d="M252 0 L246 13.5 L294 13.5 L300 0" transform="translate(-150,0)" fill="#f0f0f0" stroke="#606060" stroke-width="1"/><path d="M153.5 -1 L160 13.5 L246 13.5 L252 -1" transform="translate(-150,0)" fill="#fff" stroke="#404040" stroke-width="1"/></svg><div style="left:161px;top:424px;font-size:8.6px;letter-spacing:-0.4px;line-height:12px;font-weight:bold;color:#000;-webkit-text-stroke:0">窗口程序集_启动窗口</div><div style="left:254px;top:424px;font-size:8.3px;line-height:12px;color:#3030b0">_启动窗口</div><div style="left:0px;top:437px;width:1024px;height:1px;background:#fff"></div><div style="left:0px;top:440px;width:1024px;height:1px;background:#a8a8a8"></div><div style="left:811px;top:81px;width:211px;height:329px;background:#f0f0f0"></div><div style="left:811px;top:80px;width:211px;height:1px;background:#a0a0a0"></div><div style="left:1022px;top:80px;width:1px;height:29px;background:#a0a0a0"></div><div style="left:799px;top:82px;width:12px;height:12px;background:#f8f8f8;border:1px solid;border-color:#fff #808080 #808080 #fff"></div><svg style="left:801px;top:84px" width="8" height="7"><path d="M0.5 0.5L3.5 3.5L0.5 6.5M4.5 0.5L7.5 3.5L4.5 6.5" fill="none" stroke="#333" stroke-width="0.9"/></svg><div style="left:812px;top:82px;width:38px;height:14px;background:#f0f0f0;border-right:1px solid #808080"></div><div style="left:820px;top:83px;font-size:8.3px;line-height:11px">变<span style="display:inline-block;width:3px"></span>量</div><div style="left:850px;top:84px;width:39px;height:12px;border-right:1px solid #808080"></div><div style="left:856px;top:85px;font-size:8.3px;line-height:11px">子程序</div><div style="left:813px;top:96px;width:197px;height:18px;background:#fff"></div><div style="left:813px;top:113px;width:197px;height:1px;background:#ececec"></div><svg style="left:818px;top:100px" width="9" height="10"><circle cx="5.5" cy="3.5" r="2.6" stroke="#4a7ac8" stroke-width="1.1" fill="none"/><path d="M3.7 5.5L1 8.5" stroke="#4a7ac8" stroke-width="1.5"/></svg><div style="left:813px;top:114px;width:197px;height:296px;background:#fff"></div><div style="left:812px;top:96px;width:1px;height:314px;background:#e0e0e0"></div><div style="left:1010px;top:84px;width:13px;height:326px;background:#f7f7f7;border-left:1px solid #a0a0a0"></div><div style="left:1011px;top:85px;width:11px;height:11px;background:#f0f0f0;border:1px solid;border-color:#fff #808080 #808080 #fff"></div><svg style="left:1014px;top:89px" width="5" height="3"><path d="M0 3H5L2.5 0Z" fill="#000"/></svg><div style="left:1011px;top:97px;width:11px;height:11px;background:#f0f0f0;border:1px solid;border-color:#fff #808080 #808080 #fff"></div><div style="left:1011px;top:398px;width:11px;height:11px;background:#f0f0f0;border:1px solid;border-color:#fff #808080 #808080 #fff"></div><svg style="left:1014px;top:402px" width="5" height="3"><path d="M0 0H5L2.5 3Z" fill="#000"/></svg><div style="left:811px;top:409px;width:211px;height:1px;background:#909090"></div><div style="left:841px;top:115.5px;font-size:8.6px;line-height:11px;font-weight:bold;color:#000;-webkit-text-stroke:0">程序集变量 <span style="display:inline-block;width:9px;text-align:center">−</span> 0</div><div style="left:841px;top:125.5px;font-size:8.6px;line-height:11px;font-weight:bold;color:#000;-webkit-text-stroke:0">子程序参数 <span style="display:inline-block;width:9px;text-align:center">−</span> 0</div><div style="left:841px;top:136.5px;font-size:8.6px;line-height:11px;font-weight:bold;color:#000;-webkit-text-stroke:0">局部变量 <span style="display:inline-block;width:9px;text-align:center">−</span> 1</div><div style="left:841px;top:146.5px;font-size:8.3px;line-height:11px;color:#000"><span style="color:#ff3030;font-weight:bold">整</span> 局部_角度</div><div style="left:819px;top:121px;width:8px;height:1px;background:#c8c8c8"></div><div style="left:819px;top:121px;width:1px;height:10px;background:#c8c8c8"></div><div style="left:832px;top:147px;width:1px;height:6px;background:#c0c0c0"></div><div style="left:832px;top:152px;width:8px;height:1px;background:#c0c0c0"></div><svg style="left:820px;top:110px" width="24" height="40"><g transform="translate(-820,-110)"><rect x="827.5" y="115.5" width="10" height="9" fill="#e8e8e8" stroke="#555"/><rect x="828" y="116" width="9" height="1.8" fill="#1a1aa0"/><rect x="827" y="119" width="1.5" height="5" fill="#e0b020"/><rect x="829" y="121" width="3" height="3" fill="#4060d0"/><path d="M833 119.5H836M833 121.5H836" stroke="#777"/><path d="M826.5 128.5L831.5 125.5L836 127.5L831 130.5Z" fill="#f0f0f0" stroke="#444" stroke-width="0.9"/><path d="M826.5 128.5V131L831 133.5L836 130.5V127.5" fill="#ccc" stroke="#444" stroke-width="0.9"/><path d="M826.5 130L831 132.5L836 129.5" fill="none" stroke="#666" stroke-width="0.7"/><rect x="828.3" y="138.3" width="6.4" height="8" rx="1.6" fill="#222"/><rect x="829.3" y="139" width="4.4" height="2" rx="1" fill="#f0e020"/><rect x="830" y="142" width="3" height="3" fill="#ddd"/></g></svg><div style="left:3px;top:444px;width:7px;height:7px;border:1px solid;border-color:#fff #a0a0a0 #a0a0a0 #fff"></div><svg style="left:4px;top:445px" width="5" height="5"><path d="M0.5 0.5L4.5 4.5M4.5 0.5L0.5 4.5" stroke="#000" stroke-width="1.2"/></svg><div style="left:3px;top:452px;width:7px;height:7px;border:1px solid;border-color:#fff #a0a0a0 #a0a0a0 #fff"></div><div style="left:5px;top:454px;width:4px;height:4px;border:1px solid #000;border-top-width:2px"></div><div style="left:6px;top:462px;width:1px;height:82px;background:#a0a0a0"></div><div style="left:7px;top:462px;width:1px;height:82px;background:#fff"></div><div style="left:52px;top:443px;width:40px;height:16px;background:#f8f8f8"></div><div style="left:14px;top:456px;width:1004px;height:1px;background:#fafafa"></div><div style="left:92px;top:445px;width:1px;height:12px;background:#808080"></div><div style="left:93px;top:445px;width:1px;height:12px;background:#fff"></div><div style="left:136px;top:445px;width:1px;height:12px;background:#808080"></div><div style="left:137px;top:445px;width:1px;height:12px;background:#fff"></div><div style="left:183px;top:445px;width:1px;height:12px;background:#808080"></div><div style="left:184px;top:445px;width:1px;height:12px;background:#fff"></div><div style="left:230px;top:445px;width:1px;height:12px;background:#808080"></div><div style="left:231px;top:445px;width:1px;height:12px;background:#fff"></div><div style="left:272px;top:445px;width:1px;height:12px;background:#808080"></div><div style="left:273px;top:445px;width:1px;height:12px;background:#fff"></div><div style="left:315px;top:445px;width:1px;height:12px;background:#808080"></div><div style="left:316px;top:445px;width:1px;height:12px;background:#fff"></div><div style="left:370px;top:445px;width:1px;height:12px;background:#808080"></div><div style="left:371px;top:445px;width:1px;height:12px;background:#fff"></div><div style="left:425px;top:445px;width:1px;height:12px;background:#808080"></div><div style="left:426px;top:445px;width:1px;height:12px;background:#fff"></div><div style="left:32px;top:444.5px;font-size:8.2px;line-height:11px;color:#000">提示</div><div style="left:70px;top:444.5px;font-size:8.2px;line-height:11px;color:#000">输出</div><div style="left:108px;top:444.5px;font-size:8.2px;line-height:11px;color:#000">调用表</div><div style="left:156px;top:444.5px;font-size:8.2px;line-height:11px;color:#000">当视表</div><div style="left:202px;top:444.5px;font-size:8.2px;line-height:11px;color:#000">变量表</div><div style="left:249px;top:444.5px;font-size:8.2px;line-height:11px;color:#000">搜寻<span style="font-size:7px">1</span></div><div style="left:292px;top:444.5px;font-size:8.2px;line-height:11px;color:#000">搜寻<span style="font-size:7px">2</span></div><div style="left:334px;top:444.5px;font-size:8.2px;line-height:11px;color:#000">剪辑历史</div><div style="left:389px;top:444.5px;font-size:8.2px;line-height:11px;color:#000">备份管理</div><svg style="left:18px;top:444px" width="10" height="11"><text x="1" y="9.5" font-family="Liberation Sans" font-weight="bold" font-size="11" fill="#f0e000" stroke="#404000" stroke-width="0.8">?</text></svg><div style="left:57px;top:445px;width:8px;height:9px;border:1px solid #333;border-top:2px solid #2a2a9a;background:#fff"></div><div style="left:59px;top:448px;width:4px;height:4px;border:1px solid #555"></div><div style="left:96.0px;top:445px;width:1px;height:10px;background:#303060"></div><div style="left:98.5px;top:445px;width:1px;height:10px;background:#303060"></div><div style="left:101.0px;top:445px;width:1px;height:10px;background:#303060"></div><div style="left:95px;top:450px;width:8px;height:1px;background:#6080ff"></div><svg style="left:141px;top:444px" width="10" height="10"><circle cx="4" cy="4" r="3.2" stroke="#111" stroke-width="1.2" fill="none"/><path d="M6.3 6.3L9.5 9.5" stroke="#111" stroke-width="1.5"/></svg><svg style="left:187px;top:445px" width="12" height="9"><path d="M0.5 4.5L3.5 1L6.5 4.5L3.5 8Z" fill="#f0e000" stroke="#222"/><path d="M5 4.5L8 1L11 4.5L8 8Z" fill="#f4f4f4" stroke="#222"/></svg><div style="left:234px;top:445px;width:9px;height:9px;border:1px solid #222;border-left-width:2px;background:#fff"></div><svg style="left:238px;top:449px" width="6" height="6"><circle cx="2.5" cy="2.5" r="1.8" stroke="#111" stroke-width="1" fill="none"/><path d="M3.8 3.8L6 6" stroke="#111" stroke-width="1.4"/></svg><div style="left:277px;top:445px;width:9px;height:9px;border:1px solid #222;border-left-width:2px;background:#fff"></div><svg style="left:281px;top:449px" width="6" height="6"><circle cx="2.5" cy="2.5" r="1.8" stroke="#111" stroke-width="1" fill="none"/><path d="M3.8 3.8L6 6" stroke="#111" stroke-width="1.4"/></svg><div style="left:322px;top:446px;width:8px;height:9px;border:1px solid #444;background:#fff"></div><div style="left:324px;top:449px;width:3px;height:3px;border:1px solid #666"></div><div style="left:375px;top:445.0px;width:9px;height:1.5px;background:#1a8ad8"></div><div style="left:375px;top:447.5px;width:9px;height:1.5px;background:#1a8ad8"></div><div style="left:375px;top:450.0px;width:9px;height:1.5px;background:#1a8ad8"></div><div style="left:375px;top:452.5px;width:9px;height:1.5px;background:#1a8ad8"></div><div style="left:382px;top:452px;width:5px;height:4px;background:#203070"></div><div style="left:14px;top:460px;width:993px;height:81px;background:#008080;border-top:1px solid #808080;border-left:1px solid #808080"></div><div style="left:17px;top:461.8px;font-size:10px;letter-spacing:0.56px;line-height:11px;color:#f4f4f4">正在统计需要编译的子程序</div><div style="left:17px;top:472.40000000000003px;font-size:10px;letter-spacing:0.56px;line-height:11px;color:#f4f4f4">正在编译. . .</div><div style="left:17px;top:483.0px;font-size:10px;letter-spacing:0.56px;line-height:11px;color:#f4f4f4">正在生成主程序入口代码</div><div style="left:17px;top:493.6px;font-size:10px;letter-spacing:0.56px;line-height:11px;color:#f4f4f4">程序代码编译成功</div><div style="left:17px;top:504.2px;font-size:10px;letter-spacing:0.56px;line-height:11px;color:#f4f4f4">正在封装易格式目的代码</div><div style="left:17px;top:514.8px;font-size:10px;letter-spacing:0.56px;line-height:11px;color:#f4f4f4">开始运行被调试程序</div><div style="left:1006px;top:461px;width:12px;height:80px;background:#f0f0f0"></div><svg style="left:1008px;top:465px" width="7" height="4"><path d="M0.5 3.5L3.5 0.5L6.5 3.5" stroke="#606060" stroke-width="1" fill="none"/></svg><div style="left:1007px;top:518px;width:10px;height:11px;background:#cdcdcd"></div><svg style="left:1008px;top:533px" width="7" height="4"><path d="M0.5 0.5L3.5 3.5L6.5 0.5" stroke="#606060" stroke-width="1" fill="none"/></svg><div style="left:14px;top:541px;width:1005px;height:1px;background:#ffffff"></div><div style="left:14px;top:542px;width:1005px;height:1px;background:#a0a0a0"></div><div style="left:1018px;top:460px;width:1px;height:82px;background:#a0a0a0"></div><div style="left:1019px;top:303px;width:6px;height:180px;background:#f4f4f4;border:1px solid #d8d8d8;border-right:none;border-radius:3px 0 0 3px"></div><div style="left:1020px;top:483px;width:1px;height:62px;background:#c8c8c8"></div><div style="left:0px;top:546px;width:1024px;height:1px;background:#d8d8d8"></div><div style="left:535px;top:125px;width:292px;height:247px;background:#f0f0f0;border:1px solid #a8b4b4;box-shadow:1px 2px 6px rgba(0,0,0,0.3)"></div><div style="left:536px;top:126px;width:290px;height:17px;background:#fff"></div><div style="left:537px;top:128px;width:11px;height:11px;background:#1a9a9a;border-radius:2px"></div><svg style="left:538px;top:131px" width="9" height="7"><path d="M1 6L5 2M3 7L8 2M6 7L9 4" stroke="#d0f0f0" stroke-width="0.9"/><path d="M1 1H8" stroke="#d0f0f0" stroke-width="0.8"/></svg><div style="left:744px;top:134px;width:7px;height:1px;background:#b4b4b4"></div><div style="left:775px;top:131px;width:7px;height:7px;border:1px solid #e0e0e0"></div><svg style="left:807px;top:131px" width="8" height="8"><path d="M0 0L7.5 7.5M7.5 0L0 7.5" stroke="#606060" stroke-width="0.8"/></svg><div style="left:542px;top:153px;width:277px;height:181px;background:#f0f0f0;border-top:1px solid #696969;border-left:1px solid #696969;border-right:1px solid #ffffff;border-bottom:1px solid #ffffff"></div><div style="left:543px;top:154px;width:275px;height:1px;background:#a0a0a0"></div><div style="left:543px;top:154px;width:1px;height:179px;background:#a0a0a0"></div><svg style="left:542px;top:153px" width="277" height="181">
<path d="M8.5 8 V175" stroke="#505050" stroke-width="1.2"/>
<path d="M5 8.5 L8.5 2 L12 8.5 Z" fill="#f0f0f0" stroke="#404040" stroke-width="0.9"/>
<path d="M8 85.3 H272" stroke="#404040" stroke-width="1.2"/>
<path d="M271.5 81.5 L276 85.3 L271.5 89 Z" fill="#f0f0f0" stroke="#404040" stroke-width="0.9"/>
<polyline points="8.00,85.30 9.33,83.45 10.67,81.60 12.00,79.76 13.33,77.92 14.67,76.10 16.00,74.28 17.33,72.48 18.67,70.69 20.00,68.92 21.33,67.17 22.67,65.45 24.00,63.74 25.33,62.07 26.67,60.42 28.00,58.80 29.33,57.21 30.67,55.66 32.00,54.15 33.33,52.67 34.67,51.23 36.00,49.84 37.33,48.48 38.67,47.17 40.00,45.91 41.33,44.70 42.67,43.54 44.00,42.42 45.33,41.36 46.67,40.35 48.00,39.40 49.33,38.50 50.67,37.66 52.00,36.88 53.33,36.16 54.67,35.50 56.00,34.89 57.33,34.35 58.67,33.87 60.00,33.46 61.33,33.11 62.67,32.82 64.00,32.59 65.33,32.43 66.67,32.33 68.00,32.30 69.33,32.33 70.67,32.43 72.00,32.59 73.33,32.82 74.67,33.11 76.00,33.46 77.33,33.87 78.67,34.35 80.00,34.89 81.33,35.50 82.67,36.16 84.00,36.88 85.33,37.66 86.67,38.50 88.00,39.40 89.33,40.35 90.67,41.36 92.00,42.42 93.33,43.54 94.67,44.70 96.00,45.91 97.33,47.17 98.67,48.48 100.00,49.84 101.33,51.23 102.67,52.67 104.00,54.15 105.33,55.66 106.67,57.21 108.00,58.80 109.33,60.42 110.67,62.07 112.00,63.74 113.33,65.45 114.67,67.17 116.00,68.92 117.33,70.69 118.67,72.48 120.00,74.28 121.33,76.10 122.67,77.92 124.00,79.76 125.33,81.60 126.67,83.45 128.00,85.30 129.33,87.15 130.67,89.00 132.00,90.84 133.33,92.68 134.67,94.50 136.00,96.32 137.33,98.12 138.67,99.91 140.00,101.68 141.33,103.43 142.67,105.15 144.00,106.86 145.33,108.53 146.67,110.18 148.00,111.80 149.33,113.39 150.67,114.94 152.00,116.45 153.33,117.93 154.67,119.37 156.00,120.76 157.33,122.12 158.67,123.43 160.00,124.69 161.33,125.90 162.67,127.06 164.00,128.18 165.33,129.24 166.67,130.25 168.00,131.20 169.33,132.10 170.67,132.94 172.00,133.72 173.33,134.44 174.67,135.10 176.00,135.71 177.33,136.25 178.67,136.73 180.00,137.14 181.33,137.49 182.67,137.78 184.00,138.01 185.33,138.17 186.67,138.27 188.00,138.30 189.33,138.27 190.67,138.17 192.00,138.01 193.33,137.78 194.67,137.49 196.00,137.14 197.33,136.73 198.67,136.25 200.00,135.71 201.33,135.10 202.67,134.44 204.00,133.72 205.33,132.94 206.67,132.10 208.00,131.20 209.33,130.25 210.67,129.24 212.00,128.18 213.33,127.06 214.67,125.90 216.00,124.69 217.33,123.43 218.67,122.12 220.00,120.76 221.33,119.37 222.67,117.93 224.00,116.45 225.33,114.94 226.67,113.39 228.00,111.80 229.33,110.18 230.67,108.53 232.00,106.86 233.33,105.15 234.67,103.43 236.00,101.68 237.33,99.91 238.67,98.12 240.00,96.32 241.33,94.50 242.67,92.68 244.00,90.84 245.33,89.00 246.67,87.15 248.00,85.30" fill="none" stroke="#ff7060" stroke-width="1"/>
</svg><div style="left:549px;top:240.5px;font-family:'Liberation Serif',serif;font-size:8px;line-height:9px;font-weight:bold;color:#222">0</div><div style="left:664px;top:240px;font-family:'Liberation Serif',serif;font-size:8.5px;line-height:9px;font-weight:bold;color:#222">Π</div><div style="left:783px;top:240.5px;font-family:'Liberation Serif',serif;font-size:8.5px;line-height:9px;font-weight:bold;color:#222"><span style="font-size:6.5px">2</span>Π</div><div style="left:733px;top:341px;width:68px;height:25px;background:#e1e1e1;border:1px solid #adadad"></div><div style="left:733px;top:347px;width:68px;text-align:center;font-size:8.3px;line-height:12px;color:#000">按钮</div></body></html>
